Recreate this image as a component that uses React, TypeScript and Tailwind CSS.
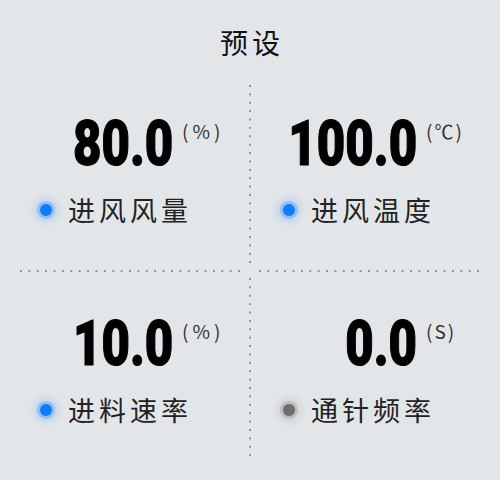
import type { ReactNode } from 'react'

type Cell = {
  value: string
  unit: string
  label: string
  active: boolean
}

const cells: Cell[] = [
  { value: '80.0', unit: '%', label: '进风风量', active: true },
  { value: '100.0', unit: '℃', label: '进风温度', active: true },
  { value: '10.0', unit: '%', label: '进料速率', active: true },
  { value: '0.0', unit: 'S', label: '通针频率', active: false },
]

const cjk = "font-['Noto_Sans_CJK_SC','Noto_Sans',sans-serif]"

function App() {
  return (
    <main className={`h-[480px] w-[500px] overflow-hidden bg-[#e3e6e9] text-[#222] ${cjk}`}>
      <h1 className="h-[85px] pt-[24px] pl-[4px] text-center text-[28px] leading-[36px] tracking-[4px] text-[#111]">
        预设
      </h1>

      <div className="grid grid-cols-[1fr_2px_1fr] grid-rows-[181px_8px_184px] px-5">
        <ValueCell cell={cells[0]} side="left" top />
        <VLine className="mb-[3px]" />
        <ValueCell cell={cells[1]} side="right" top />

        <HLine className="mr-[5px]" />
        <div />
        <HLine className="ml-2" />

        <ValueCell cell={cells[2]} side="left" />
        <VLine className="mt-[4px]" />
        <ValueCell cell={cells[3]} side="right" />
      </div>
    </main>
  )
}

function VLine({ className = '' }: { className?: string }) {
  return (
    <div
      className={`w-[2px] bg-[linear-gradient(to_bottom,#8c9094_2px,transparent_2px)] bg-[length:2px_8.4px] bg-repeat-y ${className}`}
    />
  )
}

function HLine({ className = '' }: { className?: string }) {
  return (
    <div
      className={`mt-[4px] h-[2px] bg-[linear-gradient(to_right,#8c9094_2px,transparent_2px)] bg-[length:8.4px_2px] bg-repeat-x ${className}`}
    />
  )
}

function ValueCell({ cell, side, top = false }: { cell: Cell; side: 'left' | 'right'; top?: boolean }) {
  const isLeft = side === 'left'

  return (
    <div className={`${top ? 'pt-[27px]' : 'pt-[38px]'} ${isLeft ? 'pl-4' : 'pl-7'}`}>
      <div className="flex items-start">
        <div className={`flex ${isLeft ? 'ml-[37px] w-[109px] justify-start' : 'ml-[2px] w-[136px] justify-end'}`}>
          <Big origin={isLeft ? 'left' : 'right'}>{cell.value}</Big>
        </div>
        <span
          className={`mt-[6px] shrink-0 text-[19px] leading-[26px] text-[#333] ${
            isLeft ? 'tracking-[4px]' : 'ml-[9px] tracking-[2px]'
          }`}
        >
          ({cell.unit})
        </span>
      </div>

      <div className="mt-[17px] flex items-center">
        <Dot active={cell.active} />
        <span className="ml-[16px] text-[27px] leading-[36px] tracking-[4px] text-[#222]">{cell.label}</span>
      </div>
    </div>
  )
}

function Big({ children, origin }: { children: ReactNode; origin: 'left' | 'right' }) {
  return (
    <span
      className={`inline-block shrink-0 scale-x-[0.78] font-['Roboto',sans-serif] text-[63px] leading-[63px] font-black text-black [-webkit-text-stroke:1.2px_black] ${
        origin === 'left' ? 'origin-left' : 'origin-right'
      }`}
    >
      {children}
    </span>
  )
}

function Dot({ active }: { active: boolean }) {
  return active ? (
    <span className="ml-[4px] block h-3 w-3 shrink-0 rounded-full bg-[#0f7bff] shadow-[0_0_0_3px_rgba(15,123,255,0.25),0_0_7px_6px_rgba(15,123,255,0.18)]" />
  ) : (
    <span className="ml-[4px] block h-3 w-3 shrink-0 rounded-full bg-[#6e6e6e] shadow-[0_0_0_3px_rgba(110,110,110,0.22),0_0_7px_6px_rgba(110,110,110,0.16)]" />
  )
}

export default App
